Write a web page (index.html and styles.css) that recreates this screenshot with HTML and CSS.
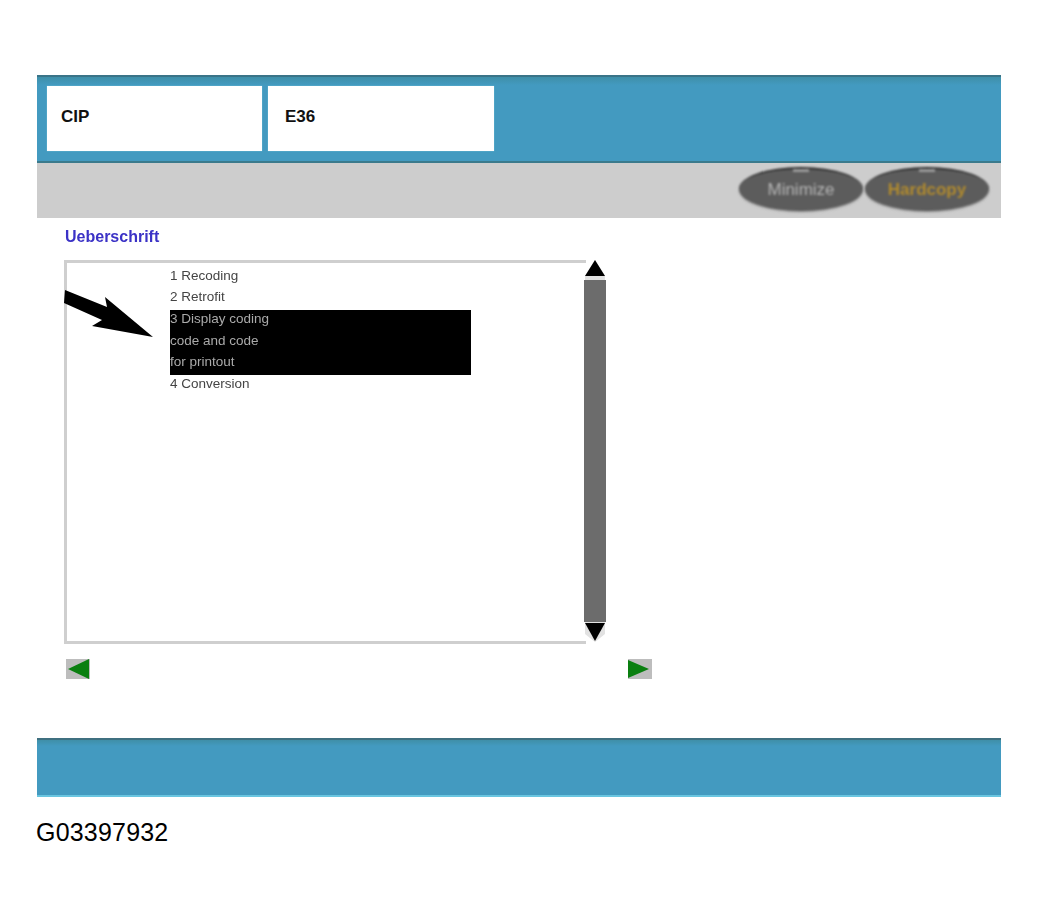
FILE: index.html
```html
<!DOCTYPE html>
<html lang="en">
<head>
<meta charset="utf-8">
<title>CIP E36</title>
<link rel="stylesheet" href="styles.css">
</head>
<body>
<main class="app">
  <header class="head">
    <div class="card card-a">CIP</div>
    <div class="card card-b">E36</div>
  </header>
  <div class="tools">
    <button class="pill pill-min">Minimize</button>
    <button class="pill pill-hard">Hardcopy</button>
  </div>
  <section class="content">
    <h1 class="title">Ueberschrift</h1>
    <div class="listrow">
      <div class="listbox">
        <ul class="items">
          <li>1 Recoding</li>
          <li>2 Retrofit</li>
          <li class="sel">3 Display coding<br>code and code<br>for printout</li>
          <li>4 Conversion</li>
        </ul>
      </div>
      <div class="scroll">
        <svg class="sc-arrow" viewBox="0 0 22 20" width="22" height="20"><path d="M11 0 21 16V20H1V16Z" fill="#e2e2e2"/><path d="M11 0 21 16H1Z" fill="#000"/></svg>
        <div class="sc-track"></div>
        <svg class="sc-arrow" viewBox="0 0 22 20" width="22" height="20"><path d="M1 0H21V12L11 20 1 12Z" fill="#e2e2e2"/><path d="M1 1H21L11 19Z" fill="#000"/></svg>
      </div>
    </div>
    <svg class="pointer" viewBox="0 0 92 52" width="92" height="52"><path d="M1 0 43 17 41 7 89 47 28 36 38 30 0 13Z" fill="#000"/></svg>
    <div class="nav">
      <svg class="nav-btn" viewBox="0 0 24 20" width="24" height="20"><rect width="24" height="20" fill="#bdbdbd"/><path d="M2 10 23 0V20Z" fill="#0a7f10"/></svg>
      <svg class="nav-btn" viewBox="0 0 24 20" width="24" height="20"><rect width="24" height="20" fill="#bdbdbd"/><path d="M0 1 21 10 0 19Z" fill="#0a7f10"/></svg>
    </div>
  </section>
  <footer class="foot"></footer>
</main>
<p class="code">G03397932</p>
</body>
</html>
```

FILE: styles.css
```css
* { box-sizing: border-box; }
html, body { margin: 0; padding: 0; background: #fff; }
body { width: 1040px; height: 916px; overflow: hidden; padding-top: 75px; font-family: "Liberation Sans", Arial, sans-serif; }
.app { margin-left: 37px; width: 964px; }
.head {
  height: 88px;
  background: linear-gradient(#3f8fa8, #439ac0 8px);
  border-top: 2px solid #3a7488;
  border-bottom: 2px solid #3b7a8c;
  padding: 9px 0 0 10px;
  display: flex;
  gap: 6px;
  align-items: flex-start;
}
.card {
  height: 65px;
  background: #fff;
  box-shadow: 0 0 1px 0 #8fd4e8;
  font-weight: 700;
  font-size: 17px;
  line-height: 61px;
  color: #111;
}
.card-a { width: 215px; padding-left: 14px; }
.card-b { width: 226px; padding-left: 17px; }
.tools {
  height: 55px;
  background: #cdcdcd;
  display: flex;
  justify-content: flex-end;
  gap: 2px;
  padding: 4px 12px 0 0;
}
.pill {
  position: relative;
  width: 124px;
  height: 44px;
  border-radius: 50%;
  border: 0;
  border-top: 2px solid #2d2d2d;
  background: #5c5c5c;
  box-shadow: 0 1px 2px #8a8a8a;
  font: 700 17px/42px "Liberation Sans", Arial, sans-serif;
  padding: 0;
  filter: blur(0.8px);
}
.pill::before {
  content: "";
  position: absolute;
  left: 50%;
  top: 0;
  width: 16px;
  height: 3px;
  margin-left: -8px;
  background: #9a9a9a;
}
.pill-min { color: #b4b4b4; font-weight: 400; }
.pill-hard { color: #b08a2e; }
.content { position: relative; height: 520px; background: #fff; padding: 9px 0 0 27px; }
.title { margin: 0 0 13px 1px; font-size: 16px; line-height: 20px; font-weight: 700; color: #3b32c6; filter: blur(0.5px); }
.listrow { display: flex; align-items: flex-start; height: 384px; }
.listbox { width: 522px; height: 384px; border: 3px solid #cfcfcf; border-right: 0; padding: 1.6px 0 0 103px; }
.items { list-style: none; margin: 0; padding: 0; font-size: 13.5px; line-height: 21.7px; color: #444; }
.items li { filter: blur(0.5px); }
.items .sel {
  width: 301px;
  padding-bottom: 2px;
  margin-bottom: -2px;
  background: linear-gradient(#000, #000) no-repeat 0 2px;
  color: #aaa;
}
.scroll { width: 22px; height: 382px; margin-left: -2px; display: flex; flex-direction: column; }
.sc-arrow { display: block; flex: none; filter: blur(0.5px); }
.sc-track { flex: 1; background: #6c6c6c; }
.pointer { position: absolute; left: 27px; top: 72px; }
.nav { display: flex; justify-content: space-between; width: 586px; margin: 15px 0 0 2px; }
.nav-btn { display: block; filter: blur(0.5px); }
.foot {
  height: 59px;
  background: linear-gradient(#3f8fa8, #439ac0 6px);
  border-top: 2px solid #3f7080;
  border-bottom: 2px solid #69c5e0;
}
.code { margin: 21px 0 0 36px; font-size: 25px; line-height: 28px; letter-spacing: 0.2px; color: #000; }
```
